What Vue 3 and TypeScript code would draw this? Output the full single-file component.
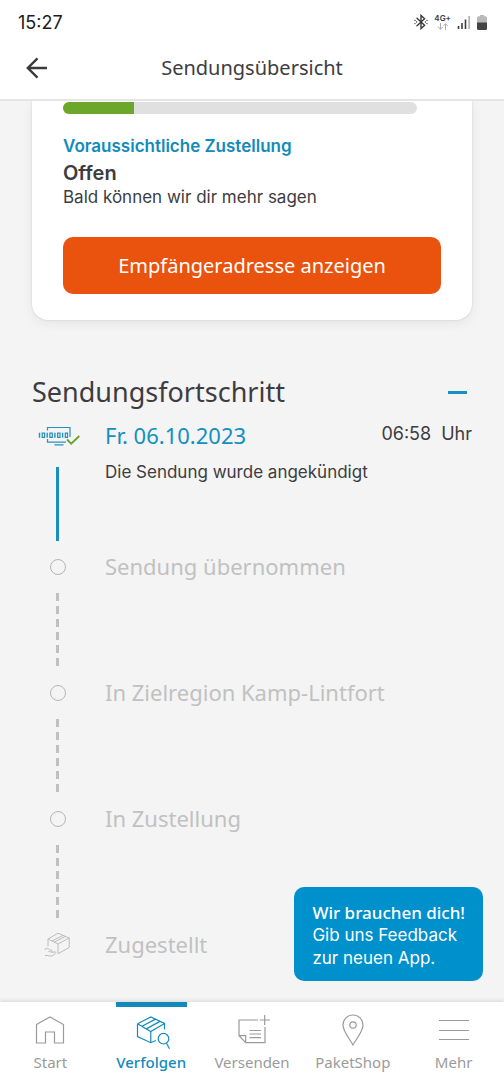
<script setup lang="ts">
interface Step {
  title: string
  note?: string
  time?: string
  state: 'done' | 'open' | 'final'
}

type TabIcon = 'home' | 'track' | 'send' | 'shop' | 'more'

interface Tab {
  label: string
  icon: TabIcon
  active?: boolean
}

const progress = 20

const steps: Step[] = [
  { title: 'Fr. 06.10.2023', note: 'Die Sendung wurde angekündigt', time: '06:58', state: 'done' },
  { title: 'Sendung übernommen', state: 'open' },
  { title: 'In Zielregion Kamp-Lintfort', state: 'open' },
  { title: 'In Zustellung', state: 'open' },
  { title: 'Zugestellt', state: 'final' },
]

const tabs: Tab[] = [
  { label: 'Start', icon: 'home' },
  { label: 'Verfolgen', icon: 'track', active: true },
  { label: 'Versenden', icon: 'send' },
  { label: 'PaketShop', icon: 'shop' },
  { label: 'Mehr', icon: 'more' },
]
</script>

<template>
  <div class="screen">
    <header class="top">
      <div class="status">
        <span class="clock">15:27</span>
        <div class="indicators">
          <svg class="bluetooth" viewBox="0 0 14 16" width="14" height="16" aria-hidden="true">
            <path d="M3 4.2l7.6 7L7 14.6V1.4l3.6 3.4L3 11.8" />
            <path d="M1 6.4v0M1 9.6v0M2.6 8v0M11.4 8v0M13 6.4v0M13 9.6v0" />
          </svg>
          <div class="network">
            <span class="generation">4G+</span>
            <svg viewBox="0 0 12 7" width="12" height="7" aria-hidden="true">
              <path d="M3.5 0v6M1 3.8l2.5 2.4L6 3.8M8.5 7V1M6.4 3l2.1-2.2L10.8 3" />
            </svg>
          </div>
          <svg viewBox="0 0 14 14" width="14" height="14" aria-hidden="true">
            <path d="M1.5 11v3M5 8v6M8.500 4.500V14" stroke="#3c3c3c" stroke-width="1.6" />
            <path d="M12.200 1v13" stroke="#b5b5b5" stroke-width="1.8" />
          </svg>
          <svg viewBox="0 0 10 15" width="10" height="15" aria-hidden="true">
            <path d="M3 0h4v1.300h1.500A1.500 1.500 0 0 1 10 2.800V8H0V2.800a1.500 1.500 0 0 1 1.500-1.500H3z" fill="#b9b9b9" />
            <path d="M0 7.500h10v6a1.500 1.500 0 0 1-1.500 1.500h-7A1.500 1.500 0 0 1 0 13.500z" fill="#444" />
          </svg>
        </div>
      </div>
      <div class="appbar">
        <button class="back" type="button" aria-label="Zurück">
          <svg viewBox="0 0 22 22" width="22" height="22" aria-hidden="true">
            <path d="M22 11H3M12.500 1.300L2.800 11l9.700 9.700" />
          </svg>
        </button>
        <h1>Sendungsübersicht</h1>
      </div>
    </header>

    <main>
      <section class="card">
        <div class="bar" role="progressbar" :aria-valuenow="progress" aria-label="Fortschritt">
          <div class="fill" :style="{ width: progress + '%' }"></div>
        </div>
        <h2 class="eta">Voraussichtliche Zustellung</h2>
        <p class="status-text">Offen</p>
        <p class="hint">Bald können wir dir mehr sagen</p>
        <button class="primary" type="button">Empfängeradresse anzeigen</button>
      </section>

      <section class="progress">
        <div class="section-head">
          <h2>Sendungsfortschritt</h2>
          <button class="collapse" type="button" aria-label="Einklappen"><span></span></button>
        </div>
        <ol>
          <li v-for="step in steps" :key="step.title" class="step" :class="step.state">
            <div class="rail">
              <div class="marker">
                <svg v-if="step.state === 'done'" viewBox="0 0 44 20" width="44" height="20" aria-hidden="true">
                  <g fill="none" stroke="#2492bd" stroke-width="1.200">
                    <path d="M11.500 4.500V1.500h22.500v9.500M11.500 13v3.200h18.500M18.500 18.800h9" />
                    <path d="M3.500 6.800v5M11.200 6.800v5M18.900 6.800v5M26.600 6.800v5" stroke-width="1.400" />
                    <path d="M6.200 7.200h2.400v4.200H6.200zM13.900 7.200h2.400v4.200h-2.400zM21.600 7.200h2.400v4.200h-2.400zM29.300 7.200h2.200v4.200h-2.200z" />
                  </g>
                  <path d="M31 13.500l4.200 4.200L43.300 10" fill="none" stroke="#67a32c" stroke-width="1.800" />
                </svg>
                <span v-else-if="step.state === 'open'" class="dot"></span>
                <svg v-else viewBox="0 0 28 26" width="28" height="26" aria-hidden="true">
                  <path d="M4 14.500V7L14 1.200l11.200 4.800v9.500L14 21.700V12L4 7M14 12l11.200-6M8 9l11-5.600M10.200 10.200l11-5.700" />
                  <path d="M.5 17.500c2-1.500 4-1 5 .2l2.500.7c1 .6 0 1.800-1.200 1.500L4.500 19.500M8 20.600l2.700-.8c1.500 0 1.300 1.500.2 2.100l-2.700 1.900c-2.500.8-4.200-.8-7.200-.3" />
                </svg>
              </div>
              <div v-if="step.state !== 'final'" class="line"></div>
            </div>
            <div class="body">
              <div class="row">
                <h3>{{ step.title }}</h3>
                <span v-if="step.time" class="time"><span>{{ step.time }}</span><span>Uhr</span></span>
              </div>
              <p v-if="step.note">{{ step.note }}</p>
            </div>
          </li>
        </ol>
      </section>
    </main>

    <footer class="bottom">
      <button class="feedback" type="button">
        <strong>Wir brauchen dich!</strong>
        <span>Gib uns Feedback</span>
        <span>zur neuen App.</span>
      </button>
      <nav>
        <a v-for="tab in tabs" :key="tab.label" href="#" :class="{ active: tab.active }">
          <svg viewBox="0 0 36 36" width="36" height="36" aria-hidden="true">
            <path v-if="tab.icon === 'home'" d="M4.500 11.500L18 4l13.500 7.500V30h-9V19h-9v11h-9z" />
            <template v-else-if="tab.icon === 'track'">
              <path d="M22.800 27.500l-5 2.200L4.500 23.500V10.800L17.800 4l13.700 6.500v6M4.500 10.800l13.300 7.700 13.700-8M17.800 18.500v11.200M9 13.300l13.500-7.200M13.300 15.900l13.700-7.500" />
              <circle cx="30.500" cy="25.700" r="5.300" />
              <path d="M33.500 30.300l3 5.400" />
            </template>
            <path
              v-else-if="tab.icon === 'send'"
              d="M24 7H5v15.700l6.700 7H31V14M5 22.700h6.700v7M25.700 7H36M30.700 2v10M15.500 17.500H27M15.500 21H27M15.500 24.700H27"
            />
            <template v-else-if="tab.icon === 'shop'">
              <path d="M18 32C14.500 25.500 8 18.500 8 12a10 10 0 0 1 20 0c0 6.500-6.500 13.500-10 20z" />
              <circle cx="18" cy="12" r="3.200" />
            </template>
            <path v-else d="M3 7.500h30M3 17.500h30M3 26.500h30" />
          </svg>
          <span>{{ tab.label }}</span>
        </a>
      </nav>
    </footer>
  </div>
</template>

<style>
body {
  margin: 0;
  background: #f4f4f4;
}
</style>

<style scoped>
.screen {
  min-height: 100vh;
  display: flex;
  flex-direction: column;
  color: #3c3c41;
  background: #f4f4f4;
  font-family: Inter, "Liberation Sans", sans-serif;
}

h1,
h2,
h3,
p,
ol {
  margin: 0;
  padding: 0;
  font-weight: 400;
}

button {
  border: 0;
  padding: 0;
  background: none;
  color: inherit;
  font: inherit;
  cursor: pointer;
}

.top {
  position: sticky;
  top: 0;
  z-index: 2;
  background: #fff;
  border-bottom: 2px solid #e5e5e5;
}

.status {
  height: 44px;
  display: flex;
  align-items: center;
  justify-content: space-between;
  padding: 0 17px 0 18px;
}

.clock {
  color: #1c1c1c;
  font-size: 18px;
}

.indicators {
  display: flex;
  align-items: center;
  gap: 6px;
}

.bluetooth {
  fill: none;
  stroke: #3c3c3c;
  stroke-width: 1.4;
  stroke-linecap: round;
}

.network {
  display: flex;
  flex-direction: column;
  align-items: center;
  color: #3c3c3c;
}

.network svg {
  fill: none;
  stroke: #ababab;
}

.generation {
  font-size: 8px;
  line-height: 9px;
  font-weight: 600;
}

.appbar {
  height: 55px;
  display: grid;
  grid-template-columns: 48px 1fr 48px;
  align-items: center;
  padding: 0 12px 8px;
  box-sizing: border-box;
}

.back {
  height: 44px;
  display: grid;
  place-items: center;
}

.back svg {
  fill: none;
  stroke: #3a3a3f;
  stroke-width: 2.4;
}

h1 {
  text-align: center;
  font-family: "Noto Sans", sans-serif;
  font-size: 20px;
  line-height: 28px;
}

main {
  flex: 1;
  padding: 0 32px;
}

.card {
  padding: 1px 31px 26px;
  background: #fff;
  border-radius: 0 0 16px 16px;
  box-shadow: 0 0 2px rgba(0, 0, 0, 0.16), 0 4px 12px rgba(0, 0, 0, 0.06);
}

.bar {
  height: 12px;
  margin-right: 24px;
  border-radius: 6px;
  background: #e0e0e0;
  overflow: hidden;
}

.fill {
  height: 100%;
  background: #6ca62a;
}

.eta {
  margin-top: 20px;
  color: #128bba;
  font-size: 17px;
  line-height: 24px;
  font-weight: 600;
}

.status-text {
  margin-top: 3px;
  font-size: 20px;
  line-height: 24px;
  font-weight: 600;
}

.hint {
  font-size: 17px;
  line-height: 24px;
}

.primary {
  width: 100%;
  height: 57px;
  margin-top: 28px;
  border-radius: 10px;
  background: #e9530e;
  color: #fff;
  font-family: "Noto Sans", sans-serif;
  font-size: 20px;
}

.progress {
  padding-top: 54px;
}

.section-head {
  display: flex;
  align-items: center;
  justify-content: space-between;
  height: 36px;
}

.section-head h2 {
  font-family: "Noto Sans", sans-serif;
  font-size: 27px;
  line-height: 36px;
}

.collapse {
  width: 30px;
  height: 36px;
  display: grid;
  place-items: center;
}

.collapse span {
  width: 19px;
  height: 3px;
  background: #1791bd;
}

ol {
  list-style: none;
  margin-top: 12px;
}

.step {
  display: grid;
  grid-template-columns: 51px 1fr;
  column-gap: 22px;
  color: #c1c1c1;
}

.rail {
  display: flex;
  flex-direction: column;
  align-items: center;
}

.marker {
  height: 26px;
  display: grid;
  place-items: center;
}

.marker svg {
  display: block;
}

.final .marker svg {
  fill: none;
  stroke: #bcbcbc;
}

.done .marker {
  height: 28px;
  margin-bottom: 4px;
}

.dot {
  width: 14px;
  height: 14px;
  border: 1px solid #b5b5b5;
  border-radius: 50%;
}

.line {
  width: 3px;
  height: 74px;
  margin: 13px 0;
  background: repeating-linear-gradient(#c0c0c0 0 8px, transparent 8px 13px);
}

.done .line {
  background: #1b8fbc;
}

.row {
  display: flex;
  justify-content: space-between;
  align-items: flex-start;
}

h3 {
  font-family: "Noto Sans", sans-serif;
  font-size: 22px;
  line-height: 24px;
}

.done h3 {
  color: #1290bf;
  line-height: 26px;
}

.body p {
  margin-top: 12px;
  color: #3c3c41;
  font-size: 17px;
  line-height: 24px;
}

.time {
  display: flex;
  gap: 10px;
  color: #3c3c41;
  font-size: 18px;
  line-height: 24px;
}

.bottom {
  position: sticky;
  bottom: 0;
}

.feedback {
  position: absolute;
  right: 21px;
  bottom: calc(100% + 21px);
  display: flex;
  flex-direction: column;
  align-items: flex-start;
  padding: 14px 18px 11px;
  border-radius: 10px;
  background: #0090cc;
  color: #fff;
  font-size: 17px;
  line-height: 23px;
  white-space: nowrap;
}

.feedback strong {
  font-family: "Noto Sans", sans-serif;
  font-weight: 500;
}

nav {
  display: grid;
  grid-template-columns: repeat(5, 1fr);
  background: #fff;
  box-shadow: 0 -1px 4px rgba(0, 0, 0, 0.12);
}

nav a {
  display: flex;
  flex-direction: column;
  align-items: center;
  justify-self: center;
  min-width: 71px;
  height: 78px;
  box-sizing: border-box;
  padding-top: 6px;
  border-top: 5px solid transparent;
  color: #9a9a9a;
  font-family: "Noto Sans", sans-serif;
  font-size: 15px;
  line-height: 20px;
  text-decoration: none;
}

nav a.active {
  color: #128bba;
  border-top-color: #128bba;
  font-weight: 500;
}

nav svg {
  fill: none;
  stroke: currentColor;
  stroke-width: 1.2;
  overflow: visible;
  margin-bottom: 3px;
}
</style>
